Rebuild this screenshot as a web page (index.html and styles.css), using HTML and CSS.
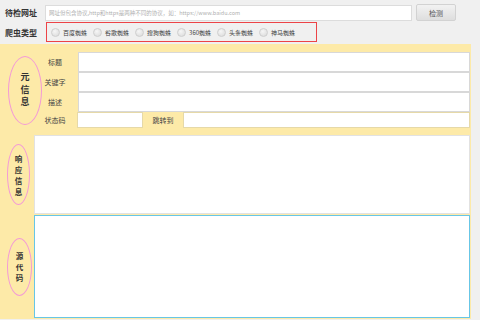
FILE: index.html
```html
<!DOCTYPE html>
<html lang="zh-CN">
<head>
  <meta charset="UTF-8">
  <meta name="viewport" content="width=device-width, initial-scale=1.0">
  <title>网址检测</title>
  <link rel="stylesheet" href="styles.css">
</head>
<body>
  <div class="top">
    <div class="top-row">
      <span class="top-label">待检网址</span>
      <input type="text" class="url-input" placeholder="网址但包含协议,http和https是两种不同的协议，如：https://www.baidu.com">
      <button type="button" class="btn-check">检测</button>
    </div>
    <div class="top-row">
      <span class="top-label">爬虫类型</span>
      <div class="spider-box">
        <label class="radio"><span class="dot"></span>百度蜘蛛</label>
        <label class="radio"><span class="dot"></span>谷歌蜘蛛</label>
        <label class="radio"><span class="dot"></span>搜狗蜘蛛</label>
        <label class="radio"><span class="dot"></span>360蜘蛛</label>
        <label class="radio"><span class="dot"></span>头条蜘蛛</label>
        <label class="radio"><span class="dot"></span>神马蜘蛛</label>
      </div>
    </div>
  </div>

  <div class="main">
    <div class="section meta">
      <div class="side side-wide">
        <div class="oval oval-meta">元<br>信<br>息</div>
      </div>
      <div class="fields">
        <div class="row">
          <span class="field-label">标题</span>
          <input type="text" class="field">
        </div>
        <div class="row">
          <span class="field-label">关键字</span>
          <input type="text" class="field">
        </div>
        <div class="row">
          <span class="field-label">描述</span>
          <input type="text" class="field">
        </div>
        <div class="row row-small">
          <span class="field-label">状态码</span>
          <input type="text" class="field field-code">
          <span class="jump-label">跳转到</span>
          <input type="text" class="field field-jump">
        </div>
      </div>
    </div>

    <div class="section resp">
      <div class="side">
        <div class="oval oval-resp">响<br>应<br>信<br>息</div>
      </div>
      <textarea class="box box-resp"></textarea>
    </div>

    <div class="section source">
      <div class="side">
        <div class="oval oval-src">源<br>代<br>码</div>
      </div>
      <textarea class="box box-src"></textarea>
    </div>
  </div>
</body>
</html>
```

FILE: styles.css
```css
body {
  margin: 0;
  background: #f0f0f0;
  font-family: 'Noto Sans CJK SC', 'Noto Sans', sans-serif;
  color: #333;
}

.top {
  padding-top: 4px;
  margin-bottom: 2px;
}

.top-row {
  display: flex;
  align-items: center;
}

.top-row + .top-row {
  margin-top: 1px;
}

.top-label {
  width: 40px;
  padding-left: 5px;
  box-sizing: border-box;
  font-size: 8px;
  font-weight: bold;
  color: #333;
  white-space: nowrap;
}

.url-input {
  width: 367px;
  height: 16px;
  margin: 0 0 0 5px;
  padding: 0 3px;
  border: 1px solid #dcdcdc;
  box-sizing: border-box;
  background: #fff;
  font-family: inherit;
  font-size: 5.5px;
  outline: none;
}

.url-input::placeholder {
  color: #b0b0b0;
}

.btn-check {
  width: 40px;
  height: 17px;
  margin-left: 4px;
  padding: 0;
  border: 1px solid #d2d2d2;
  border-radius: 2px;
  background: linear-gradient(#f2f2f2, #dedede);
  font-family: inherit;
  font-size: 7px;
  color: #555;
}

.spider-box {
  display: flex;
  align-items: center;
  width: 271px;
  height: 20px;
  margin-left: 6px;
  padding-left: 4px;
  border: 1px solid #ec4347;
  box-sizing: border-box;
}

.radio {
  display: flex;
  align-items: center;
  margin-right: 6px;
  font-size: 6px;
  color: #444;
  white-space: nowrap;
}

.dot {
  width: 9px;
  height: 9px;
  margin-right: 3px;
  border: 1px solid #cfcfcf;
  border-radius: 50%;
  box-sizing: border-box;
  background: radial-gradient(circle at 40% 35%, #f6f6f6, #d8d8d8);
}

.main {
  width: 471px;
  background: #fdeaa8;
  padding-bottom: 1px;
}

.section {
  display: flex;
}

.meta {
  padding-top: 8px;
}

.side {
  width: 34px;
  flex-shrink: 0;
  display: flex;
  align-items: center;
}

.side-wide {
  width: 42px;
}

.oval {
  margin-left: 7px;
  border: 1px solid #f39ad6;
  border-radius: 50%;
  box-sizing: border-box;
  display: flex;
  align-items: center;
  justify-content: center;
  text-align: center;
  font-weight: bold;
  color: #333;
}

.oval-meta {
  margin-left: 8px;
  width: 34px;
  height: 69px;
  font-size: 9px;
  line-height: 12.5px;
}

.oval-resp {
  width: 23px;
  height: 61px;
  font-size: 7.5px;
  line-height: 11px;
}

.oval-src {
  width: 25px;
  height: 58px;
  font-size: 7.5px;
  line-height: 11px;
}

.fields {
  flex: 1;
  display: flex;
  flex-direction: column;
  padding-right: 1px;
}

.row {
  display: flex;
  align-items: center;
  height: 20px;
}

.row-small {
  height: 16px;
}

.field-label {
  width: 26px;
  margin-right: 10px;
  text-align: center;
  font-size: 7px;
  color: #444;
  white-space: nowrap;
}

.field {
  height: 100%;
  margin: 0;
  padding: 0 3px;
  border: 1px solid #d8d8d8;
  box-sizing: border-box;
  background: #fff;
  outline: none;
  flex: 1;
}

.row-small .field {
  border-color: #e6d9a8;
}

.row-small .field-label {
  margin-right: 9px;
}

.field-code {
  flex: none;
  width: 66px;
}

.jump-label {
  width: 40px;
  text-align: center;
  font-size: 7px;
  color: #444;
  white-space: nowrap;
}

.box {
  flex: 1;
  margin: 0 1px 0 0;
  padding: 0;
  background: #fff;
  box-sizing: border-box;
  resize: none;
  outline: none;
}

.resp {
  margin-top: 7px;
}

.box-resp {
  height: 79px;
  border: 1px solid #e2e2e2;
}

.source {
  margin-top: 1px;
}

.box-src {
  height: 103px;
  border: 1px solid #67c6e6;
}
```
